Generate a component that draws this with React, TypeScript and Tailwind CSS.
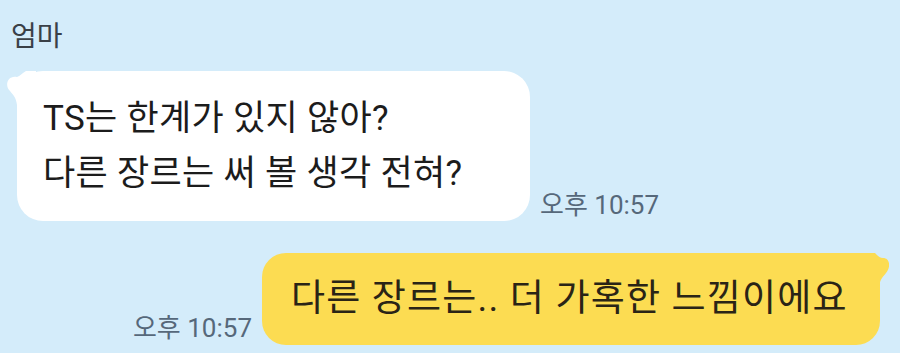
import React from "react";

const FONT = { fontFamily: "Roboto, 'Noto Sans CJK KR', sans-serif" };

export default function App() {
  return (
    <div
      className="w-[900px] h-[353px] bg-[#d4ecfa] overflow-hidden relative"
      style={FONT}
    >
      <div className="pl-[11px] pt-[17px] text-[28px] leading-[40px] text-[#3a4047]">
        엄마
      </div>
      <div className="flex items-end ml-[17px] mt-[14px]">
        <div className="relative bg-white rounded-[26px] w-[513px] h-[150px] pl-[26px] pt-[20px]">
          <svg
            className="absolute left-[-11px] top-[0px]"
            width="40"
            height="40"
            viewBox="0 0 40 40"
          >
            <path
              d="M11 6 C 2 4, -2 14, 4 20 C 7 24, 10 26, 11 34 L 30 34 L 30 0 L 20 0 C 16 2, 14 5, 11 6 Z"
              fill="#ffffff"
            />
          </svg>
          <div className="relative text-[35px] leading-[55px] tracking-[0.3px] text-[#1c1c1c]">
            <div>TS는 한계가 있지 않아?</div>
            <div>다른 장르는 써 볼 생각 전혀?</div>
          </div>
        </div>
        <div className="ml-[10px] mb-[1px] text-[26px] leading-[30px] text-[#56687a]">
          오후 10:57
        </div>
      </div>
      <div className="flex items-end justify-end pr-[20px] mt-[32px]">
        <div className="mr-[10px] mb-[2px] text-[26px] leading-[30px] text-[#56687a]">
          오후 10:57
        </div>
        <div className="relative bg-[#fcdc52] rounded-[24px] w-[618px] h-[92px] pl-[29px] flex items-center">
          <svg
            className="absolute right-[-9px] top-[0px]"
            width="36"
            height="40"
            viewBox="0 0 36 40"
          >
            <path
              d="M0 0 L 22 0 C 25 3, 27 5, 30 5 C 37 5, 38 14, 33 20 C 30 24, 27 26, 26 34 L 0 34 Z"
              fill="#fcdc52"
            />
          </svg>
          <div className="relative text-[37px] leading-[44px] tracking-[1.2px] text-[#2a2416]">
            다른 장르는.. 더 가혹한 느낌이에요
          </div>
        </div>
      </div>
    </div>
  );
}
